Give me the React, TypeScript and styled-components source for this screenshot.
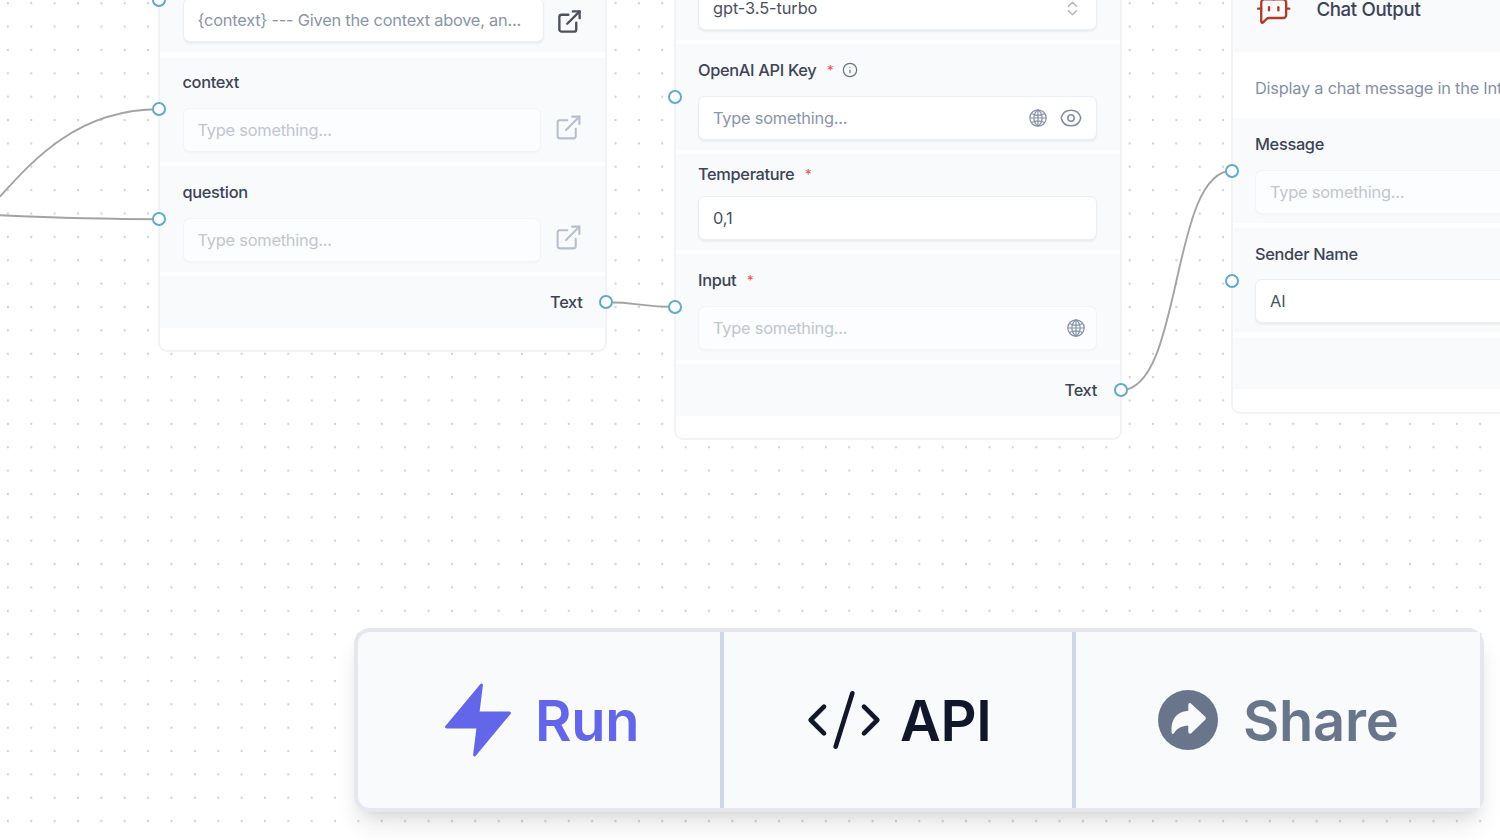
import React from "react";
import styled, { createGlobalStyle } from "styled-components";
import { BotMessageSquare, ChevronsUpDown, CodeXml, ExternalLink, Info } from "lucide-react";

const GlobalStyle = createGlobalStyle`
  body { margin: 0; }
  * { box-sizing: border-box; }
`;

const Canvas = styled.main`
  position: relative;
  width: 1500px;
  height: 840px;
  overflow: hidden;
  background: #fff;
  font-family: Inter, "Liberation Sans", sans-serif;
  font-size: 16.36px;
  color: #3d4456;
`;

const Layer = styled.svg`
  position: absolute;
  inset: 0;
`;

const Node = styled.section<{ $x: number; $y: number; $w: number; $h: number }>`
  position: absolute;
  left: ${(p) => p.$x}px;
  top: ${(p) => p.$y}px;
  width: ${(p) => p.$w}px;
  height: ${(p) => p.$h}px;
  display: flex;
  flex-direction: column;
  border: 2px solid #f1f3f6;
  border-radius: 9px;
  background: #fff;
`;

const Row = styled.div<{ $h: number; $pt?: number; $gap?: number }>`
  position: relative;
  flex: none;
  height: ${(p) => p.$h}px;
  margin-bottom: ${(p) => p.$gap ?? 4}px;
  padding: ${(p) => p.$pt ?? 14}px 22.5px 0;
  background: #f8fafc;
`;

const OutputRow = styled(Row)`
  display: flex;
  align-items: center;
  justify-content: flex-end;
  padding-top: 0;
  font-weight: 500;
  letter-spacing: -0.3px;
`;

const HeaderRow = styled(Row)`
  display: flex;
  align-items: center;
  gap: 24px;
  padding-top: 0;
  font-size: 18.7px;
  font-weight: 500;
  letter-spacing: -0.36px;
`;

const Description = styled.p`
  flex: none;
  display: flex;
  align-items: center;
  height: 66px;
  margin: 0;
  padding: 6px 22.5px 0;
  white-space: nowrap;
  letter-spacing: -0.22px;
  color: #8490a5;
`;

const Label = styled.div`
  display: flex;
  align-items: center;
  height: 24px;
  font-weight: 500;
  letter-spacing: -0.32px;
  white-space: nowrap;
`;

const Star = styled.span`
  margin: 0 9px 0 10.5px;
  font-size: 13.500px;
  color: #ec5a56;
`;

const Line = styled.div`
  display: flex;
  align-items: flex-start;
  justify-content: space-between;
`;

const OpenIcon = styled(ExternalLink)<{ $mt: number }>`
  flex: none;
  margin-top: ${(p) => p.$mt}px;
`;

const Field = styled.div<{ $muted?: boolean; $w?: number; $mt?: number; $tone?: string; $pr?: number }>`
  display: flex;
  align-items: center;
  gap: 12px;
  width: ${(p) => (p.$w ? `${p.$w}px` : "100%")};
  height: 44px;
  margin-top: ${(p) => p.$mt ?? 14}px;
  padding: 0 ${(p) => p.$pr ?? 14}px 0 14px;
  border: 1.5px solid ${(p) => (p.$muted ? "#f2f4f7" : "#ebeef2")};
  border-radius: 7px;
  background: ${(p) => (p.$muted ? "#fcfdfe" : "#fff")};
  box-shadow: 0 1.5px 2px rgba(20, 30, 50, ${(p) => (p.$muted ? 0.02 : 0.05)});
  color: ${(p) => p.$tone ?? (p.$muted ? "#bfc6d1" : "#8995a8")};
  letter-spacing: ${(p) => (p.$tone ? "-0.08px" : "-0.22px")};
  white-space: nowrap;
`;

const Value = styled.span`
  flex: 1;
`;

const Handle = styled.i<{ $y: number; $right?: boolean }>`
  position: absolute;
  top: ${(p) => p.$y - 7}px;
  ${(p) => (p.$right ? "right" : "left")}: -8px;
  width: 14px;
  height: 14px;
  border: 2.4px solid #60a9d0;
  border-radius: 50%;
  background: #fff;
`;

const Toolbar = styled.nav`
  position: absolute;
  left: 354px;
  top: 628px;
  width: 1130px;
  height: 184px;
  display: flex;
  border: 4px solid #e4e8ee;
  border-radius: 16px;
  background: #e4e8ee;
  box-shadow: 0 16px 24px -4px rgba(0, 0, 0, 0.1), 0 8px 16px -8px rgba(0, 0, 0, 0.1);
`;

const Action = styled.button<{ $w: number; $color: string; $gap: number; $pl: number; $first?: boolean }>`
  display: flex;
  align-items: center;
  flex: none;
  width: ${(p) => p.$w}px;
  height: 176px;
  gap: ${(p) => p.$gap}px;
  padding: 0 0 0 ${(p) => p.$pl}px;
  border: 0;
  border-left: ${(p) => (p.$first ? "0" : "4px solid #d0d8e3")};
  border-radius: ${(p) => (p.$first ? "12px 0 0 12px" : "0")};
  background: #f8fafc;
  color: ${(p) => p.$color};
  font: 600 56px Inter, "Liberation Sans", sans-serif;
  letter-spacing: -0.3px;
  white-space: nowrap;
`;

const Caption = styled.span`
  padding-top: 2px;
`;

const GlobeIcon = () => (
  <svg width="20" height="20" viewBox="0 0 20 20" fill="none" stroke="#8490a5" strokeWidth="1.2">
    <circle cx="10" cy="10" r="8.2" />
    <path d="M10 1.8v16.4M1.8 10h16.4M10 1.8C4.5 6 4.5 14 10 18.2M10 1.8c5.500 4.200 5.500 12.200 0 16.400M3.200 5.500c4 2 9.600 2 13.600 0M3.200 14.500c4-2 9.600-2 13.600 0" />
  </svg>
);

const EyeIcon = () => (
  <svg width="22" height="20" viewBox="0 0 22 20" fill="none" stroke="#8490a5" strokeWidth="1.6">
    <path d="M1.200 10C2.400 5 6.200 2.200 11 2.200S19.600 5 20.800 10C19.600 15 15.800 17.800 11 17.800S2.400 15 1.200 10Z" />
    <circle cx="11" cy="10" r="3.200" />
  </svg>
);

const BoltIcon = () => (
  <svg width="84" height="84" viewBox="0 0 24 24" fill="currentColor" stroke="currentColor" strokeWidth="0.8" strokeLinejoin="round">
    <path d="M13 2 3 14h9l-1 8 10-12h-9l1-8z" />
  </svg>
);

const ShareIcon = () => (
  <svg width="60" height="60" viewBox="0 0 60 60">
    <circle cx="30" cy="30" r="30" fill="currentColor" />
    <path
      d="M30.300 20.700v-5.500c0-2.200 1.800-2.700 3.200-1.300l13.500 12.700c1.200 1.100 1.200 2.300 0 3.400L33.500 43c-1.400 1.400-3.200.8-3.200-1.200v-6c-6.500 0-10.800 2-14.300 7.400-.7 1.200-2.300.8-2.400-.6C12.500 30 18 21.500 30.300 20.700Z"
      fill="#f8fafc"
    />
  </svg>
);

const placeholder = "Type something...";

export default function App() {
  return (
    <Canvas>
      <GlobalStyle />
      <Layer width="1500" height="840">
        <defs>
          <pattern id="dots" x="-3.800" y="-8.500" width="23.370" height="23.370" patternUnits="userSpaceOnUse">
            <circle cx="11.700" cy="11.700" r="1.150" fill="#d2d2d5" />
          </pattern>
        </defs>
        <rect width="1500" height="840" fill="url(#dots)" />
        <g fill="none" stroke="#a3a3a3" strokeWidth="1.900">
          <path d="M0 196.500C33 160 78 109.300 159 109.300" />
          <path d="M0 215.300C50 217.500 90 219.200 159 219.200" />
          <path d="M606 302.300C640 302.300 640 307 675 307" />
          <path d="M1121 390.200C1183 390.200 1170 170.700 1232 170.700" />
        </g>
      </Layer>

      <Node $x={158} $y={-62} $w={449} $h={414}>
        <Row $h={112} $gap={6} $pt={20}>
          <Handle $y={60} />
          <Label />
          <Line>
            <Field $w={361} $mt={14}><Value>{"{context} --- Given the context above, an..."}</Value></Field>
            <OpenIcon $mt={23.5} size={27} strokeWidth={2.1} color="#4b5160" />
          </Line>
        </Row>
        <Row $h={104} $pt={12}>
          <Handle $y={51.3} />
          <Label>context</Label>
          <Line>
            <Field $muted $w={358}><Value>{placeholder}</Value></Field>
            <OpenIcon $mt={18.5} size={29} strokeWidth={1.7} color="#b5bfcd" />
          </Line>
        </Row>
        <Row $h={106}>
          <Handle $y={53.2} />
          <Label>question</Label>
          <Line>
            <Field $muted $w={358}><Value>{placeholder}</Value></Field>
            <OpenIcon $mt={18.5} size={29} strokeWidth={1.7} color="#b5bfcd" />
          </Line>
        </Row>
        <OutputRow $h={52}>
          Text
          <Handle $right $y={26.3} />
        </OutputRow>
      </Node>

      <Node $x={673.5} $y={-62} $w={448} $h={502}>
        <Row $h={100} $pt={10}>
          <Label />
          <Field $tone="#4a5162" $mt={12}>
            <Value>gpt-3.5-turbo</Value>
            <ChevronsUpDown size={19} strokeWidth={1.8} color="#b4b8bf" />
          </Field>
        </Row>
        <Row $h={106}>
          <Handle $y={53} />
          <Label>OpenAI API Key<Star>*</Star><Info size={16} strokeWidth={1.8} color="#697386" /></Label>
          <Field><Value>{placeholder}</Value><GlobeIcon /><EyeIcon /></Field>
        </Row>
        <Row $h={96} $pt={8}>
          <Label>Temperature<Star>*</Star></Label>
          <Field $tone="#4a5162" $mt={10}><Value>0,1</Value></Field>
        </Row>
        <Row $h={106}>
          <Handle $y={53} />
          <Label>Input<Star>*</Star></Label>
          <Field $muted $pr={10}><Value>{placeholder}</Value><GlobeIcon /></Field>
        </Row>
        <OutputRow $h={52}>
          Text
          <Handle $right $y={26.2} />
        </OutputRow>
      </Node>

      <Node $x={1230.5} $y={-36} $w={449} $h={449.5}>
        <HeaderRow $h={86} $gap={0}>
          <BotMessageSquare size={37.4} strokeWidth={1.5} color="#b23a2a" />
          Chat Output
        </HeaderRow>
        <Description>Display a chat message in the Interaction Panel.</Description>
        <Row $h={105} $gap={5}>
          <Handle $y={52.7} />
          <Label>Message</Label>
          <Field $muted><Value>{placeholder}</Value></Field>
        </Row>
        <Row $h={104} $gap={6}>
          <Handle $y={52.7} />
          <Label>Sender Name</Label>
          <Field $tone="#4a5162" $mt={13}><Value>AI</Value></Field>
        </Row>
        <OutputRow $h={51} />
      </Node>

      <Toolbar>
        <Action $first $w={362} $pl={78} $gap={15} $color="#6366e8"><BoltIcon /><Caption>Run</Caption></Action>
        <Action $w={352} $pl={80} $gap={16} $color="#10172a"><CodeXml size={80} strokeWidth={1.4} /><Caption>API</Caption></Action>
        <Action $w={408} $pl={82} $gap={25} $color="#68758b"><ShareIcon /><Caption>Share</Caption></Action>
      </Toolbar>
    </Canvas>
  );
}
